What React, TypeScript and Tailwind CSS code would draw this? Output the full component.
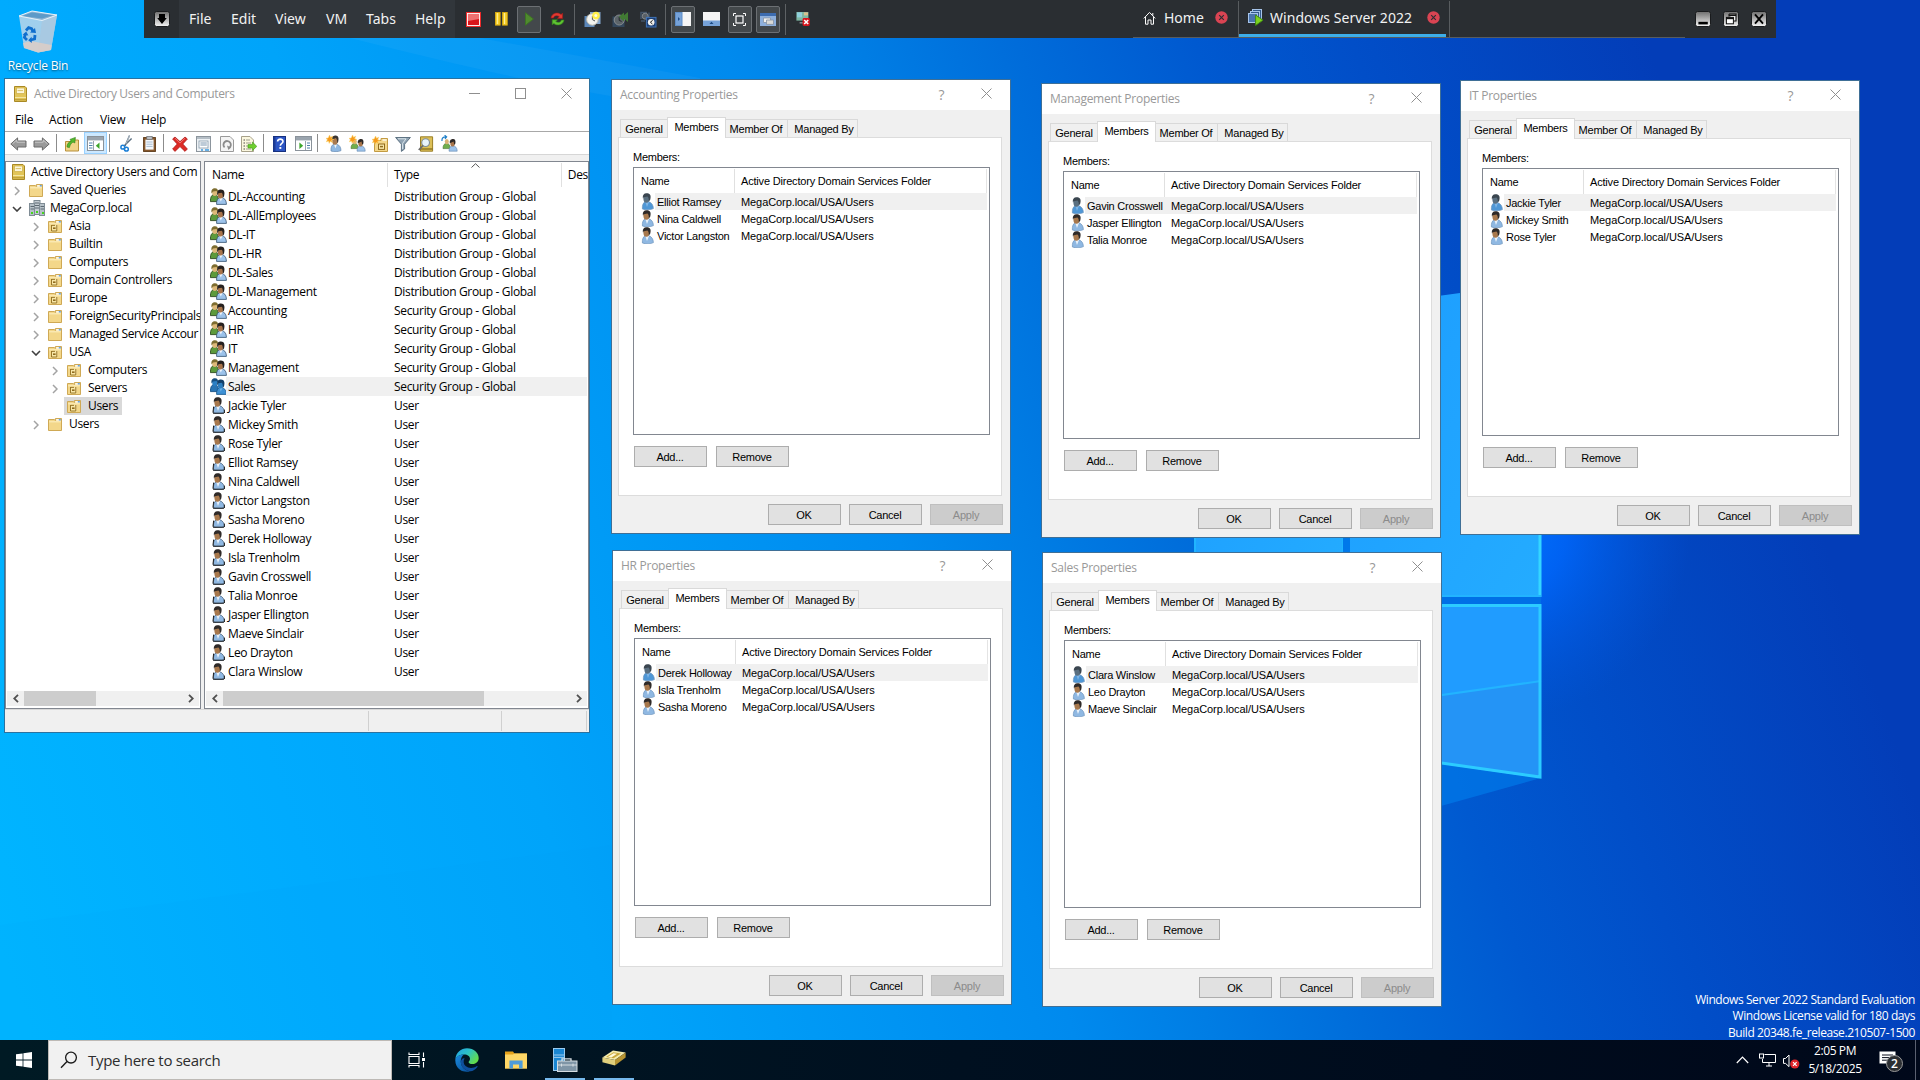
import React from 'react';

const UI = "font-['Open_Sans','Noto_Sans',sans-serif]";
const DLG = "font-['Liberation_Sans',Arial,sans-serif]";
const BAR = "font-['Noto_Sans',sans-serif]";

/* ---------- wallpaper ---------- */

function Wallpaper() {
  return (
    <svg className="absolute inset-0" width="1920" height="1080" viewBox="0 0 1920 1080">
      <defs>
        <linearGradient id="sky" gradientUnits="userSpaceOnUse" x1="0" y1="950" x2="1750" y2="330">
          <stop offset="0" stopColor="#00b5ff" />
          <stop offset="0.17" stopColor="#00abfe" />
          <stop offset="0.3" stopColor="#00a4fa" />
          <stop offset="0.46" stopColor="#0092f2" />
          <stop offset="0.53" stopColor="#008aee" />
          <stop offset="0.6" stopColor="#007de4" />
          <stop offset="0.67" stopColor="#006edb" />
          <stop offset="0.77" stopColor="#0059d0" />
          <stop offset="0.85" stopColor="#014ec8" />
          <stop offset="1" stopColor="#033db8" />
        </linearGradient>
        <radialGradient id="glow" gradientUnits="userSpaceOnUse" cx="1500" cy="530" r="190">
          <stop offset="0" stopColor="#0074ff" />
          <stop offset="0.35" stopColor="#0066fa" stopOpacity="0.85" />
          <stop offset="1" stopColor="#0058e0" stopOpacity="0" />
        </radialGradient>
        <linearGradient id="pane" x1="0" y1="0" x2="1" y2="1">
          <stop offset="0" stopColor="#1c9cff" />
          <stop offset="1" stopColor="#24acff" />
        </linearGradient>
      </defs>
      <rect width="1920" height="1080" fill="url(#sky)" />
      <rect x="1250" y="300" width="500" height="500" fill="url(#glow)" />
      <path d="M350 38 C480 70 560 90 700 110 L700 78 L480 38Z" fill="#ffffff" opacity="0.04" />
      <path d="M0 925 L612 845 L612 1040 L0 1040Z" fill="#0098f0" opacity="0.06" />
      <path d="M1441 806 L1541 778 L1441 764Z" fill="#0084f0" opacity="0.55" />
      <path d="M1195 330 L1343 310 V597 H1195Z" fill="url(#pane)" stroke="#20b4ff" strokeWidth="2" />
      <path d="M1350 308 L1541 282 V597 H1350Z" fill="url(#pane)" />
      <path d="M1540 282 V597" stroke="#34d6ff" strokeWidth="3" />
      <path d="M1350 596 H1541" stroke="#22b4ff" strokeWidth="2" />
      <rect x="1343" y="300" width="7" height="300" fill="#0078ea" />
      <rect x="1350" y="597" width="191" height="7" fill="#0070e6" />
      <path d="M1350 605 H1541 V778 L1350 751Z" fill="#209cff" />
      <path d="M1350 708 L1541 681 V778 L1350 751Z" fill="#2494f6" />
      <path d="M1350 708 L1541 681" stroke="#22b4ff" strokeWidth="2" />
      <path d="M1350 605.5 H1540 V777 L1350 750" stroke="#2cccff" strokeWidth="3" fill="none" />
    </svg>
  );
}

/* ---------- small icons ---------- */

function UserIcon({ selected = false, dark = false }: { selected?: boolean; dark?: boolean }) {
  const face = selected ? '#5a6f80' : '#a8784c';
  const shirt = selected ? '#4f97d6' : '#8fb8e2';
  return (
    <svg width="13" height="17" viewBox="0 0 13 17" className="shrink-0">
      <path d="M1.4 16 C1 12 2.4 9.5 4.4 8.6 L8 8.8 C10.8 9.8 12.2 12 12.4 15.6 C9 17.2 5 17.2 1.4 16Z" fill={shirt} stroke={dark ? '#3c5470' : '#6f95bd'} strokeWidth="0.7" />
      <path d="M4.2 8.8 L6 14 L8 9Z" fill={selected ? '#7fb4e4' : '#e8f1fa'} />
      <ellipse cx="5.4" cy="5.6" rx="3" ry="4.2" fill={face} />
      <path d="M2 5.8 C1.2 1.4 3.4 0.2 5.8 0.2 C9.2 0.2 10.4 2.4 9.2 6.8 L7.8 8.6 C8 6 7.6 4.4 6.4 3.4 C4.8 4 3 4 2.4 4.4Z" fill={selected ? '#3b4650' : '#2f2a28'} />
      {dark && <path d="M1.6 9.6 L1 15.6 M1 16.2 H12 M12.4 12.6 V16" stroke="#1f1f1f" strokeWidth="1" />}
    </svg>
  );
}

function GroupIcon({ selected = false }: { selected?: boolean }) {
  return (
    <svg width="17" height="17" viewBox="0 0 17 17" className="shrink-0">
      <path d="M0.4 13.6 C0.4 9 1.6 6.6 4.5 6.6 C7 6.6 8.5 9 8.5 13.6Z" fill={selected ? '#2874b4' : '#5c9a3c'} stroke={selected ? '#144f85' : '#2b4a1e'} strokeWidth="0.9" />
      <ellipse cx="4.8" cy="4.6" rx="2.6" ry="3.5" fill={selected ? '#2a7fc4' : '#dcb878'} />
      <path d="M1.6 5.6 C0.8 1.6 2.6 0.2 5 0.2 C7.4 0.2 8.4 2 8 4.6 L6.4 3 L3 3.4Z" fill={selected ? '#174f80' : '#7d6d30'} />
      <path d="M6.6 16.4 C6.2 12.4 7.8 9.8 10.5 9.4 C14 9.4 16.4 12 16.4 16.4Z" fill={selected ? '#3d90d4' : '#9cc2ea'} stroke={selected ? '#165489' : '#34506f'} strokeWidth="0.8" />
      <path d="M9.2 9.8 L10.8 13.6 L12.6 9.9Z" fill={selected ? '#6db2e8' : '#eef5fc'} />
      <ellipse cx="10.4" cy="7" rx="2.7" ry="3.6" fill={selected ? '#2c7dbe' : '#a8744a'} />
      <path d="M7.4 7.4 C6.4 2.8 8.6 1.6 11 1.6 C14.2 1.6 15.2 4.4 14 8.4 L12.8 9.4 C13 6.8 12.4 5.2 11.6 4.8 L8.4 5.2Z" fill={selected ? '#123f69' : '#26211f'} />
    </svg>
  );
}

function Folder({ ou = false }: { ou?: boolean }) {
  return (
    <svg width="14" height="13" viewBox="0 0 14 13" className="shrink-0">
      <path d="M0.5 1.5 H6.4 L7.4 2.6 V0.5 H13.5 V12.5 H0.5Z" fill="#f3d78a" stroke="#cfa955" />
      <path d="M8.2 1.2 H12.6 V2.6 H8.2Z" fill="#fff" />
      <path d="M10.8 1.2 H12.8 V2.4 H10.8Z" fill="#3f8fe0" />
      <path d="M1.2 3.8 H12.8" stroke="#fdf0c2" strokeWidth="1" />
      {ou && (
        <>
          <path d="M3 5 H9.5 V11.4 H3Z" fill="#f8e7a8" />
          <path d="M3.5 5 V11 H8.8 M8.8 5 V11 M3.5 5.4 H7" stroke="#8f6b1c" strokeWidth="0.9" fill="none" />
          <path d="M5 8.2 H7.6" stroke="#8f6b1c" strokeWidth="1.6" />
        </>
      )}
    </svg>
  );
}

function Book() {
  return (
    <svg width="13" height="16" viewBox="0 0 13 16" className="shrink-0">
      <path d="M0.5 0.5 H11 L12.5 2 V15.5 H0.5Z" fill="#e2c558" stroke="#a98925" />
      <rect x="2.5" y="2" width="8" height="5.5" fill="#fbf6da" stroke="#d2b450" strokeWidth="0.8" />
      <path d="M3.6 4.6 H9" stroke="#d8bf68" />
      <path d="M1 11.5 H12" stroke="#f4e6a4" />
      <path d="M1 13.8 H12" stroke="#b49330" />
    </svg>
  );
}

function Domain() {
  return (
    <svg width="16" height="16" viewBox="0 0 16 16" className="shrink-0">
      <rect x="5" y="0.5" width="6" height="14" fill="#c3ccd2" stroke="#7c8992" />
      <rect x="0.5" y="3.5" width="5" height="12" fill="#b6c1c8" stroke="#7f8c95" />
      <rect x="10.5" y="3.5" width="5" height="12" fill="#b6c1c8" stroke="#7f8c95" />
      <path d="M6 3 H10 M6 5.5 H10 M6 8 H10 M1.5 6.5 H5 M1.5 9 H5 M11.5 6.5 H15 M11.5 9 H15" stroke="#5d6972" />
      <rect x="2" y="12" width="2" height="2" fill="#45d51c" />
      <rect x="7" y="11" width="2" height="2" fill="#45d51c" />
      <rect x="13" y="12" width="2" height="2" fill="#45d51c" />
    </svg>
  );
}

function Arrow({ flip = false }: { flip?: boolean }) {
  return (
    <svg width="17" height="14" viewBox="0 0 17 14" className={flip ? '-scale-x-100' : ''}>
      <path d="M0.8 7 L7.6 0.9 V4 H16 V10 H7.6 V13.1Z" fill="#9a9a9a" stroke="#6a6a6a" />
      <path d="M2.6 6.8 L6.8 3 V5.2 H15" stroke="#c9c9c9" fill="none" />
    </svg>
  );
}

function Spark() {
  return <path d="M3.6 0 L4.5 2.3 L6.8 1.2 L5.6 3.5 L7.8 4.4 L5.5 5.2 L6.4 7.4 L4.2 6.3 L3.2 8.4 L2.5 6.1 L0.3 6.8 L1.5 4.7 L0 3.4 L2.2 3Z" fill="#f59a1b" stroke="#fbd060" strokeWidth="0.5" />;
}

function ToolIcon({ name }: { name: string }) {
  switch (name) {
    case 'back':
      return <Arrow />;
    case 'forward':
      return <Arrow flip />;
    case 'up':
      return (
        <svg width="16" height="16" viewBox="0 0 16 16">
          <path d="M1.5 5.5 H8 L9 4 H14.5 V15 H1.5Z" fill="#f0d488" stroke="#b8903c" />
          <path d="M3 11 C3 8 4.5 6 7.2 5.2 L6 3.4 L11.4 1.4 L10.8 7 L9 6 C7 7.4 6 9 5.4 11.6Z" fill="#53b72c" stroke="#2e7f17" strokeWidth="0.6" />
        </svg>
      );
    case 'tree':
    case 'pane':
      return (
        <svg width="17" height="15" viewBox="0 0 17 15" className="shrink-0">
          <rect x="0.5" y="0.5" width="16" height="14" fill="#fff" stroke="#8a929a" />
          <rect x="1" y="1" width="15" height="3" fill="#9aa4ae" />
          <path d="M1 4.5 H16" stroke="#d5dade" />
          {name === 'tree' ? (
            <>
              <path d="M6.5 5 V14" stroke="#9aa4ae" />
              <path d="M2 7 H5.5 M2 9.5 H5.5 M2 12 H5.5" stroke="#4e7faa" />
              <path d="M12.5 6.5 V13 L8.8 9.8Z" fill="#3ea62b" />
            </>
          ) : (
            <>
              <path d="M10.5 5 V14" stroke="#9aa4ae" />
              <path d="M12 7 H15 M12 9.5 H15 M12 12 H15" stroke="#4e7faa" />
              <path d="M4.4 6.5 V13 L8.2 9.8Z" fill="#3ea62b" />
            </>
          )}
        </svg>
      );
    case 'cut':
      return (
        <svg width="13" height="17" viewBox="0 0 13 17">
          <path d="M9.5 0.5 L5 11 M11.6 3.5 L4 11" stroke="#5c6f80" strokeWidth="1.4" />
          <path d="M9.4 1 L6.2 8.5" stroke="#d6dee5" strokeWidth="0.7" />
          <circle cx="2.8" cy="12.2" r="1.9" stroke="#1c7fd6" strokeWidth="1.5" fill="none" />
          <circle cx="6.4" cy="14.2" r="1.9" stroke="#1c7fd6" strokeWidth="1.5" fill="none" />
        </svg>
      );
    case 'paste':
      return (
        <svg width="13" height="16" viewBox="0 0 13 16">
          <rect x="0.6" y="1.6" width="11.8" height="13.8" fill="#8a5a2e" stroke="#5d3a18" />
          <rect x="2.4" y="3.6" width="8.2" height="10" fill="#f6f8fb" />
          <rect x="3.8" y="0.4" width="5.4" height="3" fill="#b9bec4" stroke="#6b6f74" strokeWidth="0.7" />
          <path d="M3.4 6 H9.6 M3.4 8.2 H9.6 M3.4 10.4 H9.6" stroke="#a9bdd2" />
        </svg>
      );
    case 'delete':
      return (
        <svg width="16" height="16" viewBox="0 0 16 16">
          <path d="M3 1 L8 5.6 L13 1 L15.4 3 L10.8 8 L15.4 13 L13 15.4 L8 10.6 L3 15.4 L0.6 13 L5.2 8 L0.6 3Z" fill="#dd2b26" stroke="#a81512" strokeWidth="0.7" />
          <path d="M3 2.2 L8 7 L13 2.2" stroke="#f28b85" strokeWidth="0.8" fill="none" />
        </svg>
      );
    case 'props':
      return (
        <svg width="15" height="16" viewBox="0 0 15 16">
          <rect x="0.5" y="0.5" width="14" height="15" fill="#eef2f5" stroke="#8c959d" />
          <path d="M1 2 H14" stroke="#b5bec6" strokeWidth="2" />
          <rect x="3" y="5" width="9" height="7" fill="#fff" stroke="#8499ab" strokeWidth="0.8" />
          <path d="M4.4 7 H10.8 M4.4 9 H10.8" stroke="#7d97b0" />
          <path d="M5 14 H7 M9 14 H13" stroke="#3d9be0" strokeWidth="1.4" />
        </svg>
      );
    case 'refresh':
      return (
        <svg width="14" height="16" viewBox="0 0 14 16">
          <path d="M0.5 0.5 H10 L13.5 4 V15.5 H0.5Z" fill="#f4f4f4" stroke="#9a9a9a" />
          <path d="M4.6 11.4 A3.7 3.7 0 1 1 9.2 11.8" stroke="#8b8b8b" strokeWidth="1.8" fill="none" />
          <path d="M7 9.6 L11 11.4 L8.4 14Z" fill="#8b8b8b" />
        </svg>
      );
    case 'export':
      return (
        <svg width="16" height="16" viewBox="0 0 16 16">
          <path d="M0.5 0.5 H9 L12.5 4 V15.5 H0.5Z" fill="#fbf7df" stroke="#a7a18a" />
          <path d="M2.5 4 H4 M2.5 7 H4 M2.5 10 H4 M2.5 13 H4" stroke="#4a4a4a" />
          <path d="M5 4 H9 M5 7 H10 M5 10 H8 M5 13 H10" stroke="#9d9d8c" />
          <path d="M7 8.6 H11.4 V6 L15.8 10.4 L11.4 14.6 V12 H7Z" fill="#6fcf2e" stroke="#3c9617" strokeWidth="0.6" />
        </svg>
      );
    case 'help':
      return (
        <svg width="13" height="16" viewBox="0 0 13 16">
          <rect x="0.5" y="0.5" width="12" height="15" fill="#2c55c4" stroke="#16307e" />
          <path d="M1.5 1 V15" stroke="#1c3b96" strokeWidth="2" />
          <path d="M4.6 5.6 C4.6 2.2 10 2.4 10 5.4 C10 7.4 7.3 7.4 7.3 9.8" stroke="#fff" strokeWidth="1.6" fill="none" />
          <rect x="6.4" y="11" width="1.9" height="1.9" fill="#fff" />
        </svg>
      );
    case 'newuser':
      return (
        <svg width="16" height="17" viewBox="0 0 16 17">
          <path d="M5 16 C4.6 12 6 9.6 8 9.2 L11 9.4 C13.4 10 14.8 12 15 15.6 C12 17 8 17 5 16Z" fill="#8fb8e2" stroke="#6388b0" strokeWidth="0.7" />
          <path d="M8 9.2 L9.4 13.6 L11 9.5Z" fill="#eef5fb" />
          <ellipse cx="9" cy="5.8" rx="2.8" ry="4" fill="#a87a50" />
          <path d="M5.8 5 C5.6 1 8 0.4 9.6 0.4 C12.6 0.6 13.2 3 12 7.4 L11.2 7.8 C11.4 5 10.6 3.6 9.6 3Z" fill="#3a3533" />
          <Spark />
        </svg>
      );
    case 'newgroup':
    case 'members':
      return (
        <svg width="17" height="17" viewBox="0 0 17 17">
          <path d="M2 13.6 C2 10 3.4 8.4 5.6 8.4 C8 8.4 9 10 9 13.6Z" fill="#6fae4c" stroke="#44702e" strokeWidth="0.6" />
          <ellipse cx="5.8" cy="6.6" rx="2" ry="2.7" fill="#d8b274" />
          <path d="M8 16.2 C8 12.6 9.4 11 11.6 11 C14.6 11 16.2 12.8 16.2 16.2Z" fill="#9cc2ea" stroke="#6488b0" strokeWidth="0.6" />
          <ellipse cx="11.6" cy="8.6" rx="2.3" ry="3" fill="#a8744a" />
          <path d="M8.8 8.2 C8.4 4.8 10.4 4 12 4 C14.4 4 15 6 14.2 9 L13.2 9.4 L12.6 6.6Z" fill="#2d2826" />
          {name === 'newgroup' ? (
            <Spark />
          ) : (
            <path d="M1 6 C0.6 3 2.4 1.6 5 1.8 M3.6 0.2 L5.6 1.8 L4 3.8" stroke="#1f7fc8" strokeWidth="1.2" fill="none" />
          )}
        </svg>
      );
    case 'newou':
      return (
        <svg width="16" height="16" viewBox="0 0 16 16">
          <path d="M2.5 4.5 H9 V2.5 H15.5 V15.5 H2.5Z" fill="#f3d78a" stroke="#c39b42" />
          <rect x="10.6" y="3.4" width="4" height="1.2" fill="#fff" />
          <rect x="6.5" y="8" width="6" height="5.4" fill="#f8e7a8" stroke="#8f6b1c" />
          <path d="M8 10.6 H11" stroke="#8f6b1c" strokeWidth="1.5" />
          <Spark />
        </svg>
      );
    case 'filter':
      return (
        <svg width="16" height="16" viewBox="0 0 16 16">
          <path d="M0.6 1.5 H15.4 L9.6 8.2 V13 L6.4 15.4 V8.2Z" fill="#8fa3b3" stroke="#54697a" strokeWidth="0.9" />
          <path d="M3 2.8 H11 L7.6 7.4 V13" stroke="#dbe5ec" fill="none" />
        </svg>
      );
    default:
      return (
        <svg width="16" height="16" viewBox="0 0 16 16">
          <path d="M2.5 0.8 H14.6 V15.2 H2.5Z" fill="#dcbf57" stroke="#9c7f25" />
          <path d="M2.5 13 H14.6" stroke="#8c7120" strokeWidth="1.4" />
          <circle cx="7.6" cy="6.6" r="3.9" fill="#e8f3fb" stroke="#7d8b95" strokeWidth="1.1" />
          <path d="M5 9.4 L0.8 14" stroke="#6c6c6c" strokeWidth="1.8" />
        </svg>
      );
  }
}

function CloseX({ size = 11 }: { size?: number }) {
  return (
    <svg width={size} height={size} viewBox="0 0 11 11">
      <path d="M0.5 0.5 L10.5 10.5 M10.5 0.5 L0.5 10.5" stroke="#8f8f8f" strokeWidth="1" />
    </svg>
  );
}

/* ---------- Active Directory window ---------- */

const tools: [string, string][] = [
  ['back', 'w-[24px]'], ['forward', 'w-[22px]'], ['sep', 'w-[8px]'],
  ['up', 'w-[24px]'], ['tree', 'w-[23px]'], ['sep', 'w-[4px]'],
  ['cut', 'w-[30px]'], ['paste', 'w-[16px]'], ['sep', 'w-[13px]'],
  ['delete', 'w-[19px]'], ['props', 'w-[28px]'], ['refresh', 'w-[19px]'], ['export', 'w-[26px]'], ['sep', 'w-[2px]'],
  ['help', 'w-[31px]'], ['pane', 'w-[16px]'], ['sep', 'w-[12px]'],
  ['newuser', 'w-[21px]'], ['newgroup', 'w-[26px]'], ['newou', 'w-[20px]'], ['filter', 'w-[25px]'], ['find', 'w-[22px]'], ['members', 'w-[24px]'],
];

type Node = { label: string; icon: 'book' | 'folder' | 'ou' | 'domain'; indent: string; state: 'none' | 'open' | 'closed'; root?: boolean; selected?: boolean };

const tree: Node[] = [
  { label: 'Active Directory Users and Com', icon: 'book', indent: 'pl-[6px]', state: 'none', root: true },
  { label: 'Saved Queries', icon: 'folder', indent: 'pl-[4px]', state: 'closed' },
  { label: 'MegaCorp.local', icon: 'domain', indent: 'pl-[4px]', state: 'open' },
  { label: 'Asia', icon: 'ou', indent: 'pl-[23px]', state: 'closed' },
  { label: 'Builtin', icon: 'folder', indent: 'pl-[23px]', state: 'closed' },
  { label: 'Computers', icon: 'folder', indent: 'pl-[23px]', state: 'closed' },
  { label: 'Domain Controllers', icon: 'ou', indent: 'pl-[23px]', state: 'closed' },
  { label: 'Europe', icon: 'ou', indent: 'pl-[23px]', state: 'closed' },
  { label: 'ForeignSecurityPrincipals', icon: 'folder', indent: 'pl-[23px]', state: 'closed' },
  { label: 'Managed Service Accour', icon: 'folder', indent: 'pl-[23px]', state: 'closed' },
  { label: 'USA', icon: 'ou', indent: 'pl-[23px]', state: 'open' },
  { label: 'Computers', icon: 'ou', indent: 'pl-[42px]', state: 'closed' },
  { label: 'Servers', icon: 'ou', indent: 'pl-[42px]', state: 'closed' },
  { label: 'Users', icon: 'ou', indent: 'pl-[42px]', state: 'none', selected: true },
  { label: 'Users', icon: 'folder', indent: 'pl-[23px]', state: 'closed' },
];

const distribution = ['DL-Accounting', 'DL-AllEmployees', 'DL-IT', 'DL-HR', 'DL-Sales', 'DL-Management'];
const security = ['Accounting', 'HR', 'IT', 'Management', 'Sales'];
const users = [
  'Jackie Tyler', 'Mickey Smith', 'Rose Tyler', 'Elliot Ramsey', 'Nina Caldwell', 'Victor Langston', 'Sasha Moreno', 'Derek Holloway',
  'Isla Trenholm', 'Gavin Crosswell', 'Talia Monroe', 'Jasper Ellington', 'Maeve Sinclair', 'Leo Drayton', 'Clara Winslow',
];
const rows = [
  ...distribution.map((name) => ({ name, type: 'Distribution Group - Global' })),
  ...security.map((name) => ({ name, type: 'Security Group - Global' })),
  ...users.map((name) => ({ name, type: 'User' })),
];

function Chevron({ state }: { state: Node['state'] }) {
  return (
    <span className="flex w-[14px] shrink-0 items-center justify-center pt-[2px]">
      {state === 'closed' && (
        <svg width="6" height="10" viewBox="0 0 6 10"><path d="M1 1 L5 5 L1 9" stroke="#a3a3a3" strokeWidth="1.5" fill="none" /></svg>
      )}
      {state === 'open' && (
        <svg width="10" height="6" viewBox="0 0 10 6"><path d="M1 1 L5 5 L9 1" stroke="#404040" strokeWidth="1.6" fill="none" /></svg>
      )}
    </span>
  );
}

function TreeRow({ n }: { n: Node }) {
  return (
    <div className={`flex h-[18px] items-center whitespace-nowrap ${n.indent}`}>
      {!n.root && <Chevron state={n.state} />}
      <span className={`flex h-full items-center ${n.root ? '' : 'ml-[2px] pl-[3px] pr-1'} ${n.selected ? 'bg-[#d9d9d9]' : ''}`}>
        <span className={`flex shrink-0 items-center ${n.root ? 'w-[19px]' : 'w-[21px]'}`}>
          {n.icon === 'book' && <Book />}
          {n.icon === 'domain' && <Domain />}
          {n.icon === 'folder' && <Folder />}
          {n.icon === 'ou' && <Folder ou />}
        </span>
        {n.label}
      </span>
    </div>
  );
}

function ScrollBar({ thumb }: { thumb: string }) {
  return (
    <div className="mx-[1px] flex h-[15px] shrink-0 items-stretch bg-[#f0f0f0]">
      <span className="flex w-[17px] items-center justify-center">
        <svg width="6" height="9" viewBox="0 0 6 9"><path d="M5 0.8 L1.2 4.5 L5 8.2" stroke="#505050" strokeWidth="1.8" fill="none" /></svg>
      </span>
      <span className={`bg-[#cdcdcd] ${thumb}`} />
      <span className="flex-1" />
      <span className="flex w-[17px] items-center justify-center">
        <svg width="6" height="9" viewBox="0 0 6 9"><path d="M1 0.8 L4.8 4.5 L1 8.2" stroke="#505050" strokeWidth="1.8" fill="none" /></svg>
      </span>
    </div>
  );
}

function DirectoryWindow() {
  return (
    <section className={`absolute left-[4px] top-[78px] flex h-[655px] w-[586px] flex-col border border-[#2b72a0] bg-[#f0f0f0] text-[12px] tracking-[-0.34px] text-black ${UI}`}>
      <header className="flex h-[30px] shrink-0 items-center bg-white pl-[9px] text-[#999]">
        <Book />
        <span className="ml-[7px] flex-1">Active Directory Users and Computers</span>
        <span className="flex w-[45px] justify-center pb-[2px]"><svg width="11" height="11" viewBox="0 0 11 11"><path d="M0 5.5 H11" stroke="#8f8f8f" /></svg></span>
        <span className="flex w-[46px] justify-center pb-[2px]"><svg width="11" height="11" viewBox="0 0 11 11"><rect x="0.5" y="0.5" width="10" height="10" fill="none" stroke="#8f8f8f" /></svg></span>
        <span className="flex w-[46px] justify-center pb-[2px]"><CloseX /></span>
      </header>
      <nav className="flex h-[22px] shrink-0 items-center bg-white pl-[10px] tracking-[-0.2px]">
        <span className="w-[34px]">File</span>
        <span className="w-[51px]">Action</span>
        <span className="w-[41px]">View</span>
        <span>Help</span>
      </nav>
      <div className="flex h-[24px] shrink-0 items-stretch border-b border-t border-b-[#d6d6d6] border-t-[#a8a8a8] bg-white pl-[1px]">
        {tools.map(([name, w], i) =>
          name === 'sep' ? (
            <span key={i} className={`flex shrink-0 items-center justify-center ${w}`}><i className="h-[18px] w-px bg-[#8c8c8c]" /></span>
          ) : (
            <span key={i} className={`flex shrink-0 items-center justify-center pt-px ${w} ${name === 'tree' ? 'border border-[#99d1ff] bg-[#cce8ff]' : ''}`}><ToolIcon name={name} /></span>
          ),
        )}
      </div>
      <div className="mt-[6px] flex h-[548px] shrink-0 gap-[3px]">
        <div className="flex w-[196px] flex-col border border-[#828790] bg-white pb-[2px]">
          <div className="flex-1 overflow-hidden pt-[1px]">
            {tree.map((n, i) => <TreeRow key={i} n={n} />)}
          </div>
          <ScrollBar thumb="w-[72px]" />
        </div>
        <div className="flex w-[385px] flex-col border border-[#828790] bg-white pb-[2px]">
          <div className="relative flex h-[25px] shrink-0 items-center overflow-hidden pt-[1px]">
            <span className="flex h-full w-[184px] items-center border-r border-[#e0e0e0] pl-[7px]">Name</span>
            <span className="flex h-full w-[175px] items-center border-r border-[#e0e0e0] pl-[6px]">Type</span>
            <span className="pl-[6px]">Des</span>
            <svg className="absolute left-[266px] top-[1px]" width="9" height="5" viewBox="0 0 9 5"><path d="M0.5 4.5 L4.5 0.7 L8.5 4.5" stroke="#555" fill="none" /></svg>
          </div>
          <div className="flex-1">
            {rows.map((r) => {
              const sel = r.name === 'Sales';
              return (
                <div key={r.name} className="flex h-[19px] items-center pl-[5px] pr-[1px]">
                  <span className="flex w-[16px] shrink-0 justify-center">
                    {r.type === 'User' ? <UserIcon dark /> : <GroupIcon selected={sel} />}
                  </span>
                  <span className={`flex h-full flex-1 items-center pl-[2px] ${sel ? 'bg-[#f0f0f0]' : ''}`}>
                    <span className="w-[166px]">{r.name}</span>
                    <span>{r.type}</span>
                  </span>
                </div>
              );
            })}
          </div>
          <ScrollBar thumb="w-[261px]" />
        </div>
      </div>
      <footer className="flex flex-1 border-t border-[#d9d9d9] py-px">
        <i className="w-[364px] border-r border-[#d0d0d0]" />
        <i className="w-[133px] border-r border-[#d0d0d0]" />
        <i className="w-[85px] border-r border-[#d0d0d0]" />
      </footer>
    </section>
  );
}

/* ---------- property sheets ---------- */

type Sheet = { title: string; place: string; members: string[] };

const sheets: Sheet[] = [
  { title: 'Accounting Properties', place: 'left-[611px] top-[79px]', members: ['Elliot Ramsey', 'Nina Caldwell', 'Victor Langston'] },
  { title: 'Management Properties', place: 'left-[1041px] top-[83px]', members: ['Gavin Crosswell', 'Jasper Ellington', 'Talia Monroe'] },
  { title: 'IT Properties', place: 'left-[1460px] top-[80px]', members: ['Jackie Tyler', 'Mickey Smith', 'Rose Tyler'] },
  { title: 'HR Properties', place: 'left-[612px] top-[550px]', members: ['Derek Holloway', 'Isla Trenholm', 'Sasha Moreno'] },
  { title: 'Sales Properties', place: 'left-[1042px] top-[552px]', members: ['Clara Winslow', 'Leo Drayton', 'Maeve Sinclair'] },
];

function Button({ label, disabled = false }: { label: string; disabled?: boolean }) {
  return (
    <button className={`flex h-[21px] w-[73px] items-center justify-center border pr-px pt-px ${disabled ? 'border-[#bfbfbf] bg-[#cccccc] text-[#8b8b8b]' : 'border-[#adadad] bg-[#e1e1e1]'}`}>
      {label}
    </button>
  );
}

function Tab({ label, w }: { label: string; w: string }) {
  return <span className={`flex h-[18px] items-center justify-center border-r border-t border-[#d9d9d9] bg-[#f0f0f0] pt-px ${w}`}>{label}</span>;
}

function PropertySheet({ title, place, members }: Sheet) {
  return (
    <section className={`absolute flex h-[455px] w-[400px] flex-col border border-[#3f6f96] bg-[#f0f0f0] text-[11px] leading-[13px] tracking-[-0.25px] text-black ${DLG} ${place}`}>
      <header className={`flex h-[30px] shrink-0 items-center bg-white pl-[8px] text-[12px] tracking-[-0.27px] text-[#999] ${UI}`}>
        <span className="flex-1 pb-px">{title}</span>
        <span className="w-[45px] pb-[2px] text-center text-[14px]">?</span>
        <span className="mr-px flex w-[45px] justify-center pb-[3px]"><CloseX /></span>
      </header>
      <div className="flex h-[27px] shrink-0 items-end pl-[8px]">
        <span className="flex h-[18px] w-[47px] items-center justify-center border-l border-t border-[#d9d9d9] pt-px">General</span>
        <span className="relative z-10 -mb-px flex h-[21px] w-[59px] items-center justify-center border border-b-0 border-[#d9d9d9] bg-white pb-[2px]">Members</span>
        <Tab label="Member Of" w="w-[62px] pr-px" />
        <Tab label="Managed By" w="w-[70px] pl-[3px]" />
      </div>
      <div className="ml-[6px] flex h-[359px] w-[384px] shrink-0 flex-col border border-[#dcdcdc] bg-white pl-[14px]">
        <span className="mt-[13px]">Members:</span>
        <div className="mt-[3px] h-[268px] w-[357px] border border-[#828790] pl-px pr-[2px] pt-px">
          <div className="flex h-[24px] border-r border-[#e4e4e4]">
            <span className="flex w-[100px] items-center border-r border-[#e0e0e0] pl-[6px]">Name</span>
            <span className="flex items-center pl-[6px] tracking-[-0.19px]">Active Directory Domain Services Folder</span>
          </div>
          {members.map((m, i) => (
            <div key={m} className="flex h-[17px] items-center pl-[6px]">
              <span className="flex w-[14px] shrink-0"><UserIcon selected={i === 0} /></span>
              <span className={`flex h-full flex-1 items-center pl-[2px] pt-px ${i === 0 ? 'bg-[#f0f0f0]' : ''}`}>
                <span className="w-[84px] whitespace-nowrap">{m}</span>
                <span className="tracking-[-0.08px]">MegaCorp.local/USA/Users</span>
              </span>
            </div>
          ))}
        </div>
        <div className="mt-[11px] flex gap-[9px] pl-px">
          <Button label="Add..." />
          <Button label="Remove" />
        </div>
      </div>
      <footer className="mt-[8px] flex justify-end gap-[8px] pr-[7px]">
        <Button label="OK" />
        <Button label="Cancel" />
        <Button label="Apply" disabled />
      </footer>
    </section>
  );
}

/* ---------- virtual machine control bar ---------- */

const machineTools: [string, string][] = [
  ['stop', 'w-[36px]'], ['pause', 'w-[20px]'], ['play', 'w-[36px]'], ['reset', 'w-[20px]'], ['sep', 'w-[15px]'],
  ['snap', 'w-[20px]'], ['revert', 'w-[36px]'], ['manage', 'w-[21px]'], ['sep', 'w-[13px]'],
  ['side', 'w-[22px]'], ['bottom', 'w-[34px]'], ['full', 'w-[23px]'], ['unity', 'w-[33px]'], ['sep', 'w-[2px]'], ['console', 'w-[34px]'],
];

function MachineIcon({ name }: { name: string }) {
  switch (name) {
    case 'stop':
      return <svg width="15" height="15" viewBox="0 0 15 15"><rect x="0.5" y="0.5" width="14" height="14" fill="#d8151a" stroke="#ee2a2a" /><rect x="1.5" y="1.5" width="12" height="12" fill="none" stroke="#fff" strokeWidth="0.9" /><path d="M2 2 H13 V7 L2 9Z" fill="#ee7070" /></svg>;
    case 'pause':
      return <svg width="13" height="14" viewBox="0 0 13 14"><rect x="0.5" y="0.5" width="4.6" height="12.6" fill="#f6cf2c" stroke="#d6a810" /><rect x="7.6" y="0.5" width="4.6" height="12.6" fill="#f6cf2c" stroke="#d6a810" /><path d="M2.4 1 V12 M9.5 1 V12" stroke="#fdef9a" /></svg>;
    case 'play':
      return <span className="flex h-[27px] w-[24px] items-center justify-center rounded-[2px] border border-[#6c7074] bg-[#43484b]"><svg width="9" height="14" viewBox="0 0 9 14"><path d="M0.5 0.8 L8.4 7 L0.5 13.2Z" fill="#4f8a2e" stroke="#3d7424" /></svg></span>;
    case 'reset':
      return <svg width="17" height="16" viewBox="0 0 17 16"><path d="M2 7 C2.6 2 9 0.6 12.2 3.6 L13.6 2 V7.4 H8.4 L10.2 5.6 C8 4 5 4.6 4.6 7Z" fill="#e03a32" stroke="#a31a16" strokeWidth="0.6" /><path d="M15 9 C14.4 14 8 15.4 4.8 12.4 L3.2 14 V8.8 H8.6 L6.8 10.6 C9 12 11.8 11.4 12.4 9Z" fill="#5fc233" stroke="#2f8418" strokeWidth="0.6" /></svg>;
    case 'snap':
      return <svg width="17" height="17" viewBox="0 0 17 17"><rect x="0.5" y="5" width="10" height="11" fill="#5b86b8" /><rect x="6" y="1" width="10.5" height="12" fill="#83a7cf" /><circle cx="8.4" cy="8.4" r="5.8" fill="#f3f3ee" stroke="#b4b4ac" /><path d="M8.4 5 V8.6 L11 10" stroke="#555" fill="none" /><circle cx="12" cy="4.6" r="3.8" fill="#fff04a" /><circle cx="11.8" cy="4.4" r="1.5" fill="#fffde0" /></svg>;
    case 'revert':
      return <svg width="17" height="17" viewBox="0 0 17 17"><rect x="0.5" y="5.5" width="12" height="10.5" fill="#33475c" /><circle cx="7.2" cy="9" r="5" fill="#5c6469" stroke="#868c90" /><path d="M7.2 6 V9.4 L9.6 10.4" stroke="#22262a" fill="none" /><path d="M16 1 V11 L12 7.6 V10.6 L6.8 5.8 L12 1.4 V4.2Z" fill="#417a33" /></svg>;
    case 'manage':
      return <svg width="17" height="17" viewBox="0 0 17 17"><path d="M1 8 V1.5 H7 M9 1.5 V6 M1 10 H5" stroke="#435468" strokeWidth="1.5" fill="none" /><circle cx="5.2" cy="5.2" r="3" fill="#596067" stroke="#83898e" /><rect x="6.4" y="6.4" width="9.6" height="9.6" fill="#1c3f74" stroke="#3f73b8" /><circle cx="11.2" cy="11.2" r="3.3" fill="#f1f1ee" /><path d="M12.6 9.4 L10.4 11.2 L12.4 13" stroke="#1a1a1a" fill="none" /></svg>;
    case 'side':
      return <span className="flex h-[27px] w-[24px] shrink-0 items-center justify-center rounded-[2px] border border-[#6c7074] bg-[#43484b]"><svg width="16" height="14" viewBox="0 0 16 14"><rect width="16" height="14" fill="#f5f5f5" /><rect width="7" height="14" fill="#76a2d8" /><rect x="0.5" y="0.5" width="6.5" height="13" fill="none" stroke="#5e8dc6" /><path d="M3 5 L5 7 L3 9Z" fill="#1d4b86" /></svg></span>;
    case 'bottom':
      return <svg width="17" height="14" viewBox="0 0 17 14"><rect width="17" height="14" fill="#f5f5f5" /><rect y="8.5" width="17" height="5.5" fill="#76a2d8" /><path d="M6.5 12 L8.5 9.8 L10.5 12Z" fill="#1d4b86" /></svg>;
    case 'full':
      return <span className="flex h-[27px] w-[24px] shrink-0 items-center justify-center rounded-[2px] border border-[#6c7074] bg-[#43484b]"><svg width="13" height="13" viewBox="0 0 13 13"><path d="M0.5 3 V0.5 H3 M10 0.5 H12.5 V3 M12.5 10 V12.5 H10 M3 12.5 H0.5 V10" stroke="#fff" fill="none" /><rect x="3" y="3" width="7" height="7" stroke="#fff" strokeWidth="1.2" fill="none" /></svg></span>;
    case 'unity':
      return <span className="flex h-[27px] w-[24px] shrink-0 items-center justify-center rounded-[2px] border border-[#6c7074] bg-[#43484b]"><svg width="16" height="13" viewBox="0 0 16 13"><rect width="16" height="13" fill="#8eb0dc" /><rect width="16" height="3" fill="#3c6cb0" /><path d="M3.5 5 H10.5 V9.5 H3.5Z" fill="#f1f1ee" stroke="#8593a4" strokeWidth="0.8" /><path d="M6.5 7 H13.5 V11.4 H6.5Z" fill="#dadad6" stroke="#8593a4" strokeWidth="0.8" /></svg></span>;
    default:
      return <svg width="14" height="16" viewBox="0 0 14 16"><rect x="0.4" y="1" width="12" height="8.6" fill="#7fb7a2" /><rect x="1" y="1.4" width="5" height="5" fill="#8fd0dc" /><rect x="8" y="1.4" width="4" height="3" fill="#d8c08c" /><rect x="3.6" y="11" width="6" height="1.6" fill="#7b8388" /><rect x="6.6" y="7" width="7.2" height="8" rx="1.4" fill="#d8141c" /><path d="M8.2 9 L12.2 13 M12.2 9 L8.2 13" stroke="#fff" strokeWidth="1.6" /></svg>;
  }
}

function TabClose() {
  return <svg width="13" height="13" viewBox="0 0 13 13" className="shrink-0"><circle cx="6.5" cy="6.5" r="6.2" fill="#da4453" /><path d="M4.2 4.2 L8.8 8.8 M8.8 4.2 L4.2 8.8" stroke="#2a2e32" strokeWidth="1.1" /></svg>;
}

function MetalButton({ children }: { children: React.ReactNode }) {
  return (
    <svg width="16" height="16" viewBox="0 0 16 16" className="shrink-0">
      <defs>
        <linearGradient id="metal" x1="0" y1="0" x2="0" y2="1">
          <stop offset="0" stopColor="#6d6d6d" />
          <stop offset="1" stopColor="#f5f5f5" />
        </linearGradient>
      </defs>
      <rect x="0.5" y="0.5" width="15" height="15" rx="2" fill="url(#metal)" stroke="#191b1d" />
      {children}
    </svg>
  );
}

function ControlBar() {
  return (
    <div className={`absolute left-[144px] top-0 flex h-[38px] w-[1632px] bg-[#2a2e32] text-[14px] text-[#f1f2f2] ${BAR}`}>
      <span className="flex w-[35px] items-center justify-center pl-[1px]">
        <MetalButton><path d="M5 3 H11 V7 H12.8 L8 13 L3.2 7 H5Z" fill="#000" /></MetalButton>
      </span>
      <nav className="flex w-[276px] items-center bg-[#31363b] pb-px pl-[10px]">
        <span className="w-[42px]">File</span>
        <span className="w-[44px]">Edit</span>
        <span className="w-[51px]">View</span>
        <span className="w-[40px]">VM</span>
        <span className="w-[49px]">Tabs</span>
        <span>Help</span>
      </nav>
      <div className="flex items-center">
        {machineTools.map(([name, w], i) => (
          <span key={i} className={`flex shrink-0 items-center justify-center ${w}`}>
            {name === 'sep' ? <i className="h-[31px] w-px shrink-0 bg-[#5e6265]" /> : <MachineIcon name={name} />}
          </span>
        ))}
      </div>
      <div className="ml-auto flex w-[552px] border-b border-[#585c5f] pt-px">
        <span className="flex w-[106px] items-center border-r border-[#585c5f] pb-[3px] pl-[10px]">
          <svg width="13" height="14" viewBox="0 0 13 14"><path d="M0.8 7.4 L6.5 1.4 L12.2 7.4 M2.5 6 V13.2 H5 V9 H8 V13.2 H10.5 V6 M9.8 2 V4.6" stroke="#fcfcfc" fill="none" /></svg>
          <span className="ml-[8px] w-[51px]">Home</span>
          <TabClose />
        </span>
        <span className="flex w-[207px] items-center border-b-[3px] border-[#3daee9] pb-px pl-[9px]">
          <svg width="16" height="17" viewBox="0 0 16 17"><rect x="4.5" y="0.5" width="9" height="9" fill="#34598c" stroke="#a6c4ea" /><rect x="2.5" y="2.5" width="9" height="9" fill="#34598c" stroke="#a6c4ea" /><rect x="0.5" y="4.5" width="9" height="9" fill="#4a74ae" stroke="#a6c4ea" /><path d="M7.6 6 L15 11.2 L7.6 16.4Z" fill="#7ed321" stroke="#3f8a12" /></svg>
          <span className="ml-[6px] w-[157px] whitespace-nowrap tracking-[0.04px]">Windows Server 2022</span>
          <TabClose />
        </span>
        <span className="w-[4px] border-r border-[#585c5f]" />
      </div>
      <div className="flex w-[91px] items-center gap-[12px] pl-[10px]">
        <MetalButton><rect x="3.4" y="10.8" width="9.4" height="2.6" fill="#000" /></MetalButton>
        <MetalButton><path d="M6 3 H13 V10 H10.6 M6 3 V5.6 M6 4.4 H13" stroke="#111" strokeWidth="1.1" fill="#eee" /><rect x="3.4" y="6.4" width="7" height="6.4" fill="#fff" stroke="#111" /><path d="M3 7.4 H11" stroke="#111" strokeWidth="1.6" /></MetalButton>
        <MetalButton><path d="M4 3.4 L12 12.6 M12 3.4 L4 12.6" stroke="#000" strokeWidth="1.9" /></MetalButton>
      </div>
    </div>
  );
}

/* ---------- desktop ---------- */

function RecycleBin() {
  return (
    <div className={`absolute left-0 top-[10px] flex w-[76px] flex-col items-center text-[12px] tracking-[-0.2px] text-white ${UI}`}>
      <svg width="40" height="43" viewBox="0 0 40 43">
        <path d="M1 6 L14 1 L39 5 L33 40 L20 42.5 L6 38Z" fill="#bcd6ea" opacity="0.85" />
        <path d="M1 6 L14 1 L39 5 L24 10.5Z" fill="#8fb6d4" />
        <path d="M4 6 L14 2.6 L35 5.2 L24 8.6Z" fill="#5d9ac8" />
        <path d="M24 10.5 L39 5 L33 40 L20 42.5Z" fill="#a9c8e0" opacity="0.9" />
        <path d="M5 33 L13 31 L33.5 35 L33 40 L20 42.5 L6 38Z" fill="#d9cdc8" opacity="0.9" />
        <path d="M1 6 L24 10.5 L39 5 L14 1Z" fill="none" stroke="#e6f2fa" strokeWidth="1" />
        <path d="M8 20.5 L10.6 17.6 L13.6 18.6 L15 21.4 M17 25 L16.6 29 L12.6 30 M9 30 L6.4 27.4 L7.4 24" stroke="#0f6fce" strokeWidth="2.8" fill="none" />
        <path d="M12 22.6 L18 23 L17 18Z M13.6 26.8 L10.2 30.2 L13.8 33Z M4.6 24.8 L8.2 21.6 L10.4 25.4Z" fill="#0f6fce" />
      </svg>
      <span className="mt-[4px] [text-shadow:0_1px_2px_rgba(0,0,0,.5)]">Recycle Bin</span>
    </div>
  );
}

function Taskbar() {
  return (
    <footer className={`absolute bottom-0 left-0 flex h-[40px] w-full bg-linear-to-r from-[#001a24] via-[#001020] to-[#00081a] text-white ${UI}`}>
      <span className="flex w-[48px] items-center justify-center">
        <svg width="16" height="16" viewBox="0 0 16 16"><path d="M0 2.3 L6.6 1.4 V7.6 H0Z M7.4 1.3 L16 0 V7.6 H7.4Z M0 8.4 H6.6 V14.6 L0 13.7Z M7.4 8.4 H16 V16 L7.4 14.7Z" fill="#fff" /></svg>
      </span>
      <span className="flex w-[344px] items-center border border-[#bdb9b5] bg-[#f1f1f1] pl-[11px] text-[15px] tracking-[-0.3px] text-[#2d2d2d]">
        <svg width="18" height="18" viewBox="0 0 18 18" className="mr-[10px]"><circle cx="11" cy="6.6" r="5.4" fill="none" stroke="#1a1a1a" strokeWidth="1.3" /><path d="M7 10.6 L1 16.8" stroke="#1a1a1a" strokeWidth="1.4" /></svg>
        Type here to search
      </span>
      <span className="flex w-[48px] items-center justify-center">
        <svg width="17" height="16" viewBox="0 0 17 16"><path d="M1 0.5 V2.5 H11 V0.5 M1 15.5 V13.5 H11 V15.5 M1 4.5 H11 V11.5 H1Z M15.5 0.5 V5 M15.5 10 V15.5" stroke="#fff" strokeWidth="1.1" fill="none" /><rect x="14" y="6" width="3" height="3" fill="#fff" /></svg>
      </span>
      <span className="flex w-[53px] items-center justify-center">
        <svg width="24" height="24" viewBox="0 0 24 24">
          <defs>
            <linearGradient id="edgeTop" x1="0" y1="0" x2="1" y2="0.6"><stop offset="0" stopColor="#1f9fe8" /><stop offset="0.5" stopColor="#2cc0c8" /><stop offset="1" stopColor="#62dc4c" /></linearGradient>
            <linearGradient id="edgeSide" x1="0" y1="0" x2="0.6" y2="1"><stop offset="0" stopColor="#1a8ce0" /><stop offset="1" stopColor="#0c59a4" /></linearGradient>
          </defs>
          <path d="M0.4 11 C1 4.5 6 0.3 12 0.3 C19 0.3 23.7 5 23.7 10 C23.7 13.6 21 16 17.8 16 C15 16 13.6 15 13.6 14.2 C13.6 13.4 15 13 15 10.8 C15 8 12.4 6.4 9.4 6.4 C5 6.4 1.6 8.4 0.4 11Z" fill="url(#edgeTop)" />
          <path d="M0.4 11 C1.6 8 5 6.4 9 6.4 C6.6 8 5.6 11 5.8 14 C6.2 19 10 22.4 15 23.2 C12 24.2 8 24 5 21.8 C1.6 19.4 -0.1 15.4 0.4 11Z" fill="url(#edgeSide)" />
          <path d="M9.6 10.4 C8 12.6 8.4 16 10.6 18 C13.6 20.6 18.4 20.4 21.6 18.2 C22.4 17.8 22.8 18.4 22.4 19 C20.4 21.8 17.6 23.4 15 23.2 C10 22.4 5.8 19 5.8 14 C5.8 12 7.6 9.6 9.6 10.4Z" fill="#0f4f9c" />
        </svg>
      </span>
      <span className="flex w-[45px] items-center justify-center">
        <svg width="22" height="18" viewBox="0 0 22 18"><path d="M0 0.6 H8 L9.4 2.4 H22 V17.6 H0Z" fill="#e6a21a" /><path d="M0 3.6 H8 L9.4 2.4 H22 V17.6 H0Z" fill="#ffd766" /><path d="M4.4 17.6 V9.6 H17.6 V17.6 H14 V13.6 H8 V17.6Z" fill="#4f9bd8" /></svg>
      </span>
      <span className="ml-[7px] flex w-[40px] flex-col items-center border-b-2 border-[#76b9ed] pt-[8px]">
        <svg width="26" height="24" viewBox="0 0 26 24"><rect x="1.5" y="0.5" width="11" height="22" fill="#1a86d2" stroke="#9ccbee" /><path d="M1.5 7 H12.5 M1.5 9.4 H12.5" stroke="#9ccbee" /><path d="M10 13 V10.8 H19 V13" stroke="#d6dde2" strokeWidth="1.3" fill="none" /><rect x="5.5" y="13" width="19.5" height="10.5" fill="#7f95a6" stroke="#d6dde2" /><path d="M6 17 H25 M9.5 15.6 V18.6 M21 15.6 V18.6" stroke="#d6dde2" /></svg>
      </span>
      <span className="ml-[9px] flex w-[40px] flex-col items-center border-b-2 border-[#76b9ed] pt-[10px]">
        <svg width="24" height="16" viewBox="0 0 24 16"><path d="M0.4 7.4 L11 0.6 L23.6 2.6 L13 10Z" fill="#f5ecae" /><path d="M4 7 L11.4 2.2 L19 3.4 L11.6 8.2Z" fill="#c9a83c" /><path d="M6 6.8 L11.6 3.2 L15 3.8 L9.4 7.4Z" fill="#fff9d8" /><path d="M0.4 7.4 L13 10 V15.6 L0.4 12.2Z" fill="#e0cf7c" /><path d="M13 10 L23.6 2.6 V7.6 L13 15.6Z" fill="#b69432" /></svg>
      </span>
      <div className="ml-auto flex items-center">
        <svg width="13" height="8" viewBox="0 0 13 8"><path d="M0.8 7 L6.5 1.2 L12.2 7" stroke="#fff" strokeWidth="1.2" fill="none" /></svg>
        <svg width="17" height="14" viewBox="0 0 17 14" className="ml-[10px]"><path d="M5.5 1.5 H16.5 V9.5 H3.5 V6 M10 9.5 V13 M7 13 H13" stroke="#fff" fill="none" /><rect x="0.5" y="1" width="4" height="4" stroke="#fff" fill="none" /></svg>
        <svg width="17" height="15" viewBox="0 0 17 15" className="ml-[7px] mt-[2px]"><path d="M0.5 4.5 H2.5 L6 1 V12.6 L2.5 9.4 H0.5Z" stroke="#fff" fill="none" /><circle cx="11.8" cy="10" r="4.6" fill="#e0252b" /><path d="M10 8.2 L13.6 11.8 M13.6 8.2 L10 11.8" stroke="#fff" strokeWidth="1.2" /></svg>
        <span className="ml-[8px] flex w-[54px] flex-col items-center text-[12px] leading-[18px] tracking-[-0.4px]">
          <span>2:05 PM</span>
          <span>5/18/2025</span>
        </span>
        <span className="relative ml-[17px] h-[24px] w-[28px]">
          <svg width="17" height="17" viewBox="0 0 17 17" className="mt-[3px]"><path d="M0.5 0.5 H16.5 V12.5 H11 V16 L7.4 12.5 H0.5Z" fill="#fff" /><path d="M3 4 H14 M3 6.6 H14 M3 9.2 H10" stroke="#0a0f1c" /></svg>
          <span className="absolute left-[7px] top-[7px] flex h-[17px] w-[17px] items-center justify-center rounded-full border border-[#9a9a9a] bg-[#2c2f33] text-[12px] font-semibold leading-none">2</span>
        </span>
        <i className="ml-[8px] h-[40px] w-px bg-[#5a6070]" />
        <i className="w-[4px]" />
      </div>
    </footer>
  );
}

export default function App() {
  return (
    <div className="relative h-[1080px] w-[1920px] overflow-hidden bg-[#0090f0]">
      <Wallpaper />
      <RecycleBin />
      <DirectoryWindow />
      {sheets.map((s) => <PropertySheet key={s.title} {...s} />)}
      <ControlBar />
      <div className={`absolute bottom-[39px] right-[5px] text-right text-[12px] leading-[16.5px] tracking-[-0.42px] text-white ${UI}`}>
        <div>Windows Server 2022 Standard Evaluation</div>
        <div>Windows License valid for 180 days</div>
        <div>Build 20348.fe_release.210507-1500</div>
      </div>
      <Taskbar />
    </div>
  );
}
